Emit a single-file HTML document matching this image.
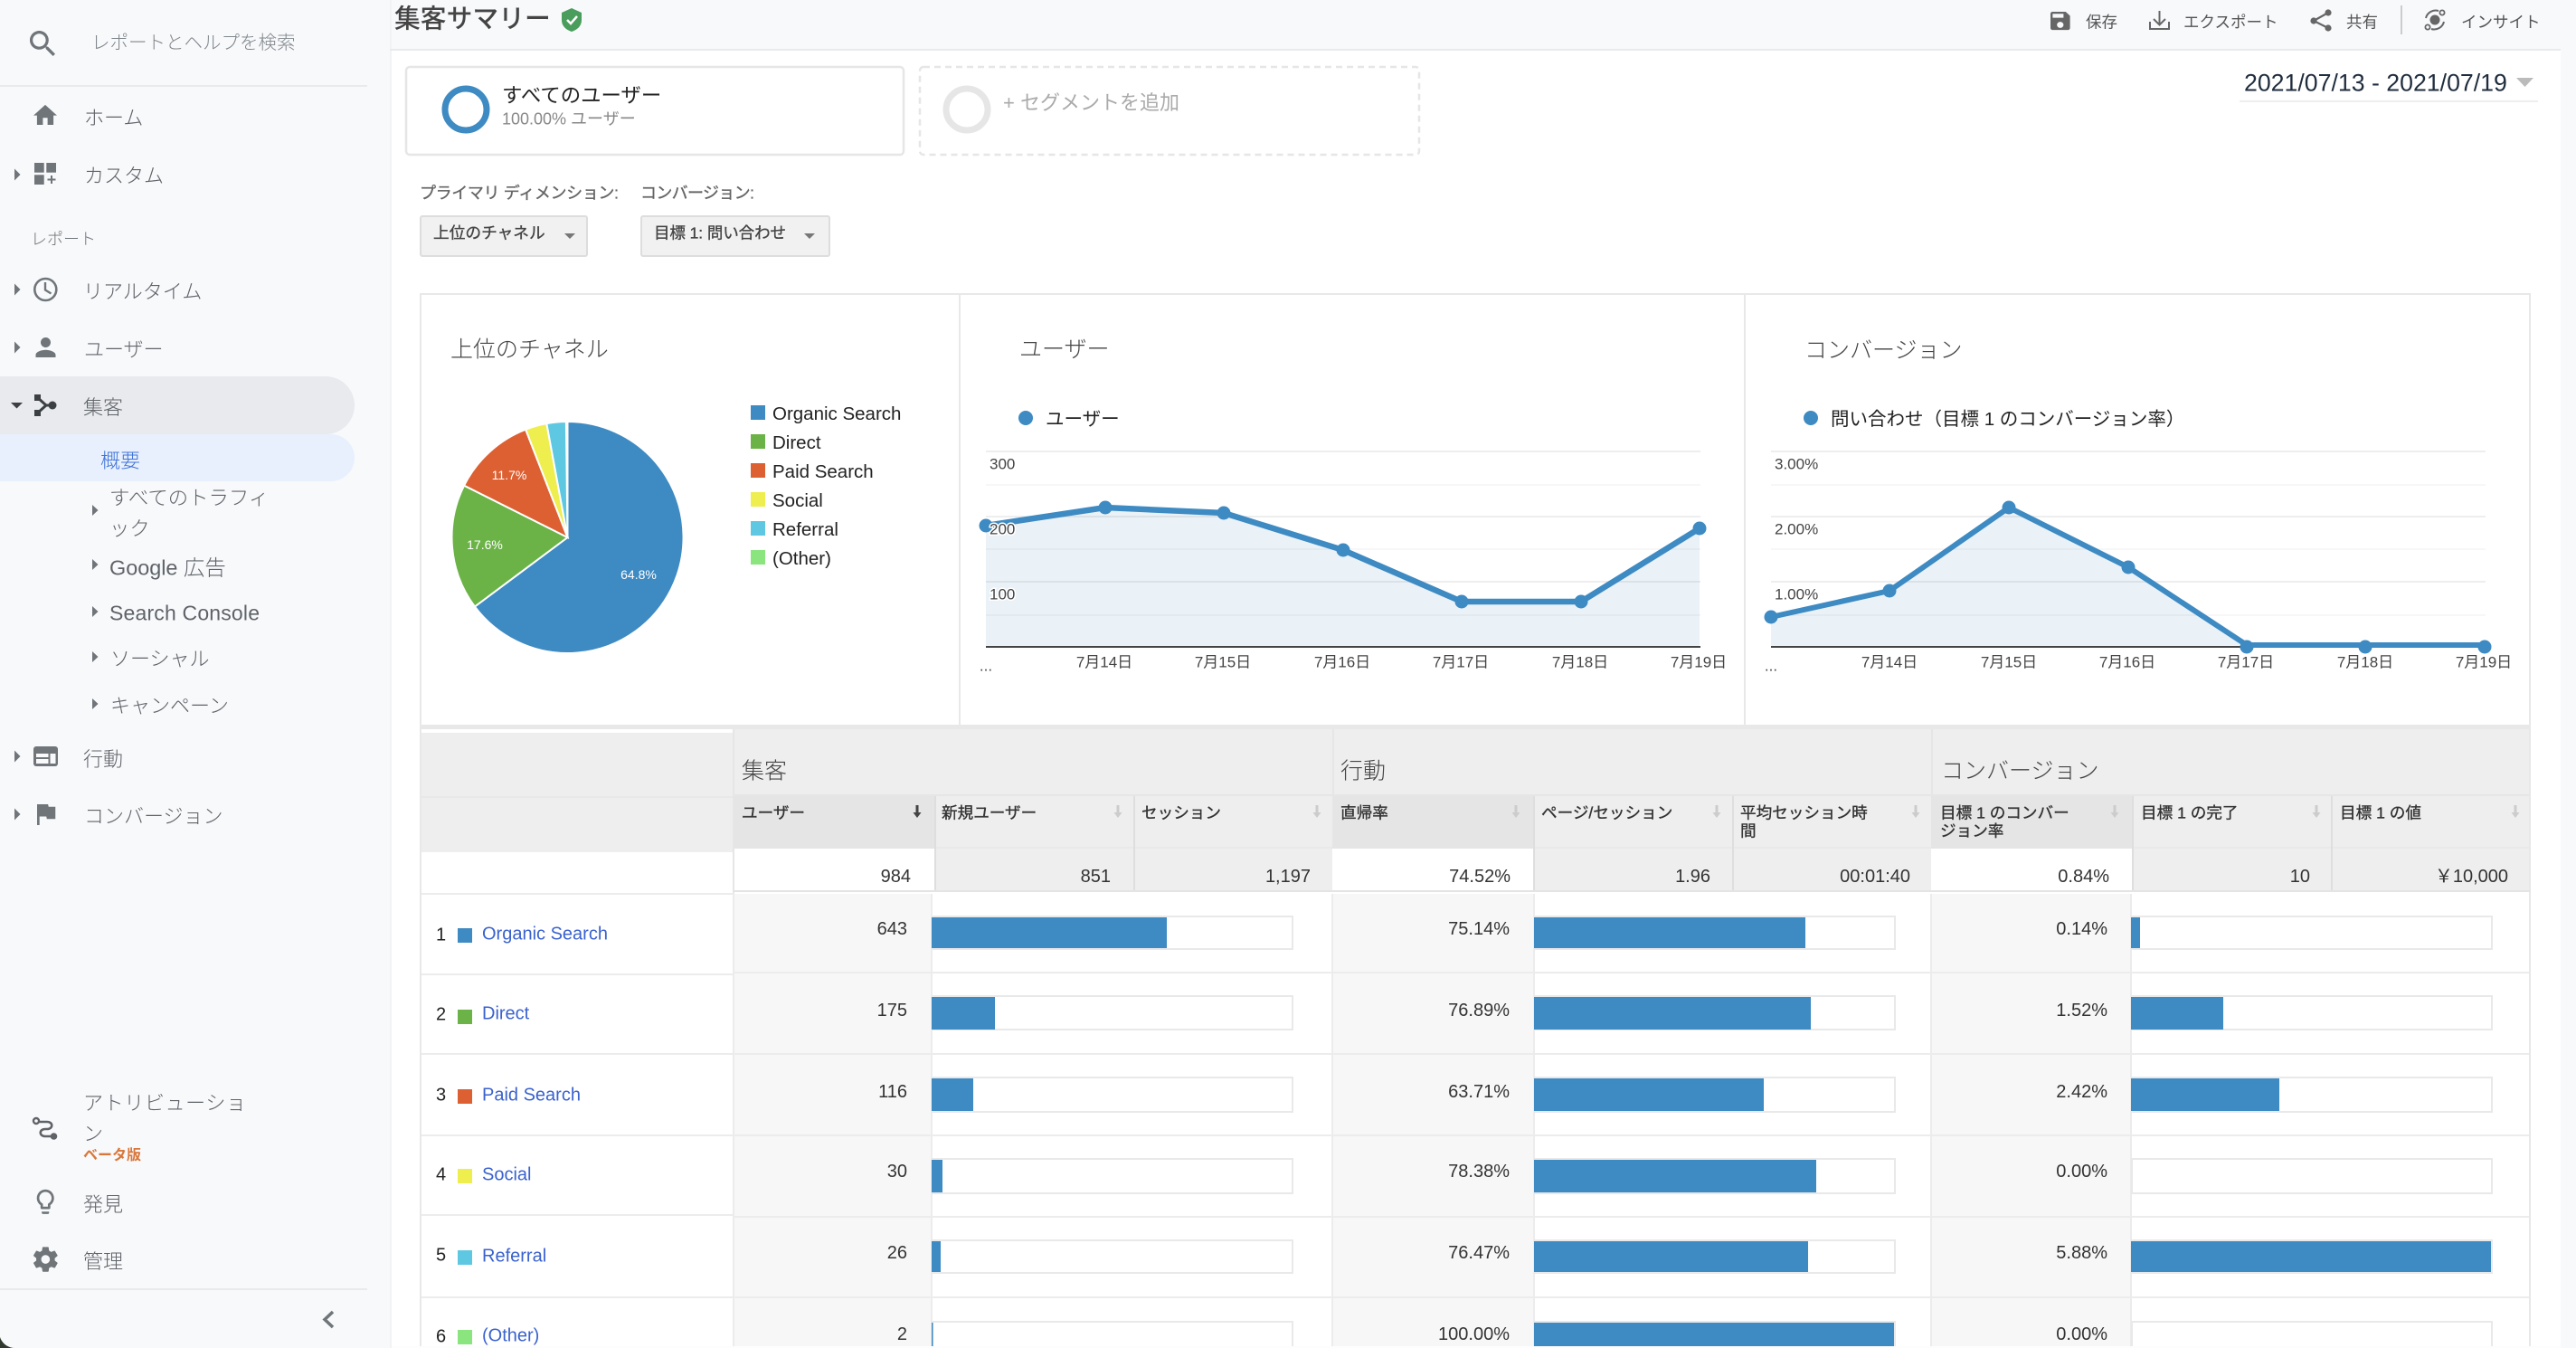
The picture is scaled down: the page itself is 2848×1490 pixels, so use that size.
<!DOCTYPE html>
<html lang="ja"><head><meta charset="utf-8"><title>集客サマリー</title>
<style>
html,body{margin:0;padding:0;background:#fff;width:2848px;height:1490px;overflow:hidden}
svg{display:block}
text{font-family:"Liberation Sans","Noto Sans CJK JP",sans-serif;dominant-baseline:central;white-space:pre}
text:not(.v):not(.ax):not(.p){transform:translateY(1.5px)}
.n{font-size:22px;fill:#5f6368;font-weight:300}
.s{font-size:22px;fill:#5f6368;font-weight:300}
.tb{font-size:17.500px;fill:#555}
.h{font-size:25px;fill:#444;font-weight:300}
.lg{font-size:20.500px;fill:#222}
.ax{font-size:17px;fill:#444}
.hd{font-size:17.600px;fill:#333;stroke:#333;stroke-width:.35px}
.v{font-size:20px;fill:#333;text-anchor:end}
.r{font-size:20px;fill:#222}
.l{font-size:20px;fill:#3a62cf}
.p{font-size:14px;fill:#fff;text-anchor:middle}
.m{text-anchor:middle}
.b{stroke:#555;stroke-width:.35px}
</style></head><body>
<svg width="2848" height="1490" viewBox="0 0 2848 1490" xmlns="http://www.w3.org/2000/svg">
<rect width="2848" height="1490" fill="#fff"/>
<!-- sidebar -->
<rect width="432" height="1490" fill="#f8f9fb"/>
<rect x="431" width="2" height="1490" fill="#f1f3f4"/>
<rect x="0" y="416" width="392" height="64" fill="#e8eaed" rx="32"/><rect x="0" y="416" width="40" height="64" fill="#e8eaed"/>
<rect x="0" y="480" width="392" height="52" fill="#e8f0fe" rx="26"/><rect x="0" y="480" width="40" height="52" fill="#e8f0fe"/>
<rect y="94" width="406" height="2" fill="#e8eaed"/>
<rect y="1424" width="406" height="2" fill="#e8eaed"/>
<g fill="#70757a">
<path transform="translate(28.2 29.2) scale(1.6)" d="M15.5 14h-.79l-.28-.27C15.41 12.59 16 11.11 16 9.5 16 5.91 13.09 3 9.5 3S3 5.91 3 9.5 5.91 16 9.5 16c1.61 0 3.09-.59 4.23-1.57l.27.28v.79l5 4.99L20.49 19l-4.99-5zm-6 0C7.01 14 5 11.99 5 9.5S7.01 5 9.5 5 14 7.01 14 9.5 11.99 14 9.5 14z"/>
<path transform="translate(34.4 112) scale(1.3)" d="M10 20v-6h4v6h5v-8h3L12 3 2 12h3v8z"/>
<rect x="38" y="180" width="10.7" height="10.7"/><rect x="51.3" y="180" width="10.7" height="10.7"/><rect x="38" y="193.3" width="10.7" height="10.7"/><path d="M56 194h2v3.5h3.5v2H58v3.5h-2v-3.500h-3.500v-2H56z"/>
<path transform="translate(34 367.500) scale(1.375)" d="M12 12c2.210 0 4-1.790 4-4s-1.790-4-4-4-4 1.790-4 4 1.790 4 4 4zm0 2c-2.670 0-8 1.340-8 4v2h16v-2c0-2.660-5.330-4-8-4z"/>
<path transform="translate(34.250 883.600) scale(1.350)" d="M14.400 6L14 4H5v17h2v-7h5.600l.4 2h7V6z"/>
<path transform="translate(33.900 1312) scale(1.360)" d="M9 21c0 .55.45 1 1 1h4c.55 0 1-.45 1-1v-1H9v1zm3-19C8.140 2 5 5.140 5 9c0 2.380 1.190 4.470 3 5.740V17c0 .55.45 1 1 1h6c.55 0 1-.45 1-1v-2.260c1.810-1.270 3-3.360 3-5.740 0-3.860-3.140-7-7-7zm2.850 11.100l-.85.6V16h-4v-2.300l-.85-.6C7.800 12.160 7 10.630 7 9c0-2.760 2.240-5 5-5s5 2.240 5 5c0 1.630-.8 3.160-2.150 4.100z"/>
<path transform="translate(33.900 1375.600) scale(1.370)" d="M19.430 12.980c.04-.32.07-.64.07-.98s-.03-.66-.07-.98l2.110-1.650c.19-.15.24-.42.12-.64l-2-3.460c-.12-.22-.39-.3-.61-.22l-2.490 1c-.52-.4-1.080-.73-1.690-.98l-.38-2.650C14.460 2.180 14.250 2 14 2h-4c-.25 0-.46.18-.49.42l-.38 2.650c-.61.25-1.170.59-1.690.98l-2.490-1c-.23-.09-.49 0-.61.22l-2 3.460c-.13.22-.07.49.12.64l2.110 1.650c-.04.32-.07.65-.07.98s.03.66.07.98l-2.110 1.650c-.19.15-.24.42-.12.64l2 3.460c.12.22.39.3.61.22l2.490-1c.52.4 1.080.73 1.690.98l.38 2.650c.03.24.24.42.49.42h4c.25 0 .46-.18.49-.42l.38-2.650c.61-.25 1.170-.59 1.690-.98l2.490 1c.23.09.49 0 .61-.22l2-3.460c.12-.22.07-.49-.12-.64l-2.110-1.650zM12 15.500c-1.930 0-3.500-1.570-3.500-3.500s1.570-3.500 3.500-3.500 3.500 1.570 3.500 3.500-1.570 3.500-3.500 3.500z"/>
<rect x="37" y="825" width="27" height="22" rx="3"/>
<polygon points="16,186.500 22.500,193 16,199.500"/><polygon points="16,313.500 22.500,320 16,326.500"/><polygon points="16,377.500 22.500,384 16,390.500"/><polygon points="16,829.500 22.500,836 16,842.500"/><polygon points="16,893.500 22.500,900 16,906.500"/>
<polygon points="102,558 108.500,564 102,570"/><polygon points="102,618 108.500,624 102,630"/><polygon points="102,670 108.500,676 102,682"/><polygon points="102,720 108.500,726 102,732"/><polygon points="102,772 108.500,778 102,784"/>
</g>
<g fill="#f8f9fb"><rect x="40" y="833" width="13.500" height="4"/><rect x="40" y="839" width="13.500" height="5"/><rect x="55.500" y="833" width="6" height="11"/></g>
<circle cx="50.300" cy="320" r="12" fill="none" stroke="#70757a" stroke-width="2.600"/>
<path d="M50 312v8.500l6.500 4" fill="none" stroke="#70757a" stroke-width="2.400"/>
<polygon points="12,445 25,445 18.500,451.500" fill="#3c4043"/>
<g fill="#3c4043"><rect x="38" y="436" width="7" height="7"/><rect x="38" y="453" width="7" height="7"/><circle cx="58" cy="448" r="4.500"/></g>
<path d="M41 439l10 9-10 9M50 448h8" fill="none" stroke="#3c4043" stroke-width="3"/>
<circle cx="40" cy="1239" r="3" fill="none" stroke="#5f6368" stroke-width="2.400"/>
<path d="M43 1240h9c7 0 7 8 0 8h-2c-7 0-7 8 0 8h7" fill="none" stroke="#5f6368" stroke-width="2.600"/>
<circle cx="59.500" cy="1256" r="3.800" fill="#5f6368"/>
<path d="M368 1450l-9 8.500 9 8.500" fill="none" stroke="#70757a" stroke-width="3.500"/>
<path d="M0 1478c2 6 7 11 15 12H0z" fill="#2f3a2c"/>
<text x="101" y="46" style="font-size:20.500px;fill:#80868b;font-weight:300">レポートとヘルプを検索</text>
<text class="n" x="93" y="129">ホーム</text>
<text class="n" x="93" y="193">カスタム</text>
<text x="34" y="263" style="font-size:18px;fill:#70757a;font-weight:300">レポート</text>
<text class="n" x="92" y="321">リアルタイム</text>
<text class="n" x="93" y="385">ユーザー</text>
<text class="n" x="92" y="449">集客</text>
<text x="111" y="508" style="font-size:22px;fill:#3f74d8;font-weight:300">概要</text>
<text class="s" x="121" y="549" style="font-size:22.400px">すべてのトラフィ</text>
<text class="s" x="121" y="583" style="font-size:22.400px">ック</text>
<text class="s" x="121" y="626" style="font-size:23.400px">Google 広告</text>
<text class="s" x="121" y="676" textLength="166" style="font-size:23px">Search Console</text>
<text class="s" x="122" y="727">ソーシャル</text>
<text class="s" x="122" y="779">キャンペーン</text>
<text class="n" x="92" y="838">行動</text>
<text class="n" x="93" y="901">コンバージョン</text>
<text class="n" x="92" y="1218" textLength="180">アトリビューショ</text>
<text class="n" x="92" y="1252">ン</text>
<text x="92" y="1276" style="font-size:16px;fill:#d9773a;font-weight:700">ベータ版</text>
<text class="n" x="92" y="1330">発見</text>
<text class="n" x="92" y="1393">管理</text>

<!-- header -->
<rect x="433" width="2415" height="54" fill="#f8f9fb"/>
<rect x="431" y="54" width="2400" height="2" fill="#e8eaed"/>
<rect x="2831" width="17" height="1490" fill="#f8f9fb"/>
<text x="436" y="20" style="font-size:28.800px;fill:#444;font-weight:500">集客サマリー</text>
<path d="M632 9l11 5v8c0 7-5 11-11 13-6-2-11-6-11-13v-8z" fill="#4a9d5c"/>
<path d="M627 22l4 4 7-8" fill="none" stroke="#fff" stroke-width="2.500"/>
<path transform="translate(2263.400 9.600) scale(1.200 1.120)" fill="#666" d="M17 3H5c-1.110 0-2 .9-2 2v14c0 1.100.89 2 2 2h14c1.100 0 2-.9 2-2V7l-4-4zm-5 16c-1.660 0-3-1.340-3-3s1.340-3 3-3 3 1.340 3 3-1.340 3-3 3zm3-10H5V5h10v4z"/>
<text class="tb" x="2306" y="23">保存</text>
<path d="M2377 24v8h21v-8M2387.500 12v15M2381 21l6.500 6.500 6.500-6.500" fill="none" stroke="#666" stroke-width="2"/>
<text class="tb" x="2414" y="23">エクスポート</text>
<g fill="#666"><circle cx="2574" cy="14" r="3.600"/><circle cx="2558" cy="23" r="3.600"/><circle cx="2574" cy="31" r="3.600"/></g>
<path d="M2574 14l-16 9 16 8" fill="none" stroke="#666" stroke-width="2.200"/>
<text class="tb" x="2594" y="23">共有</text>
<rect x="2654" y="6" width="2" height="32" fill="#ccc"/>
<circle cx="2692" cy="22" r="5.500" fill="#666"/>
<path d="M2696 12a11 11 0 0 0-14 8M2688 32a11 11 0 0 0 14-8" fill="none" stroke="#666" stroke-width="2"/>
<circle cx="2700" cy="14" r="2.600" fill="none" stroke="#666" stroke-width="1.800"/><circle cx="2684" cy="30" r="2.600" fill="none" stroke="#666" stroke-width="1.800"/>
<text class="tb" x="2721" y="23">インサイト</text>
<text x="2481" y="90" style="font-size:26.700px;fill:#1f2d3d">2021/07/13 - 2021/07/19</text>
<polygon points="2782,86 2801,86 2791.500,96" fill="#bbb"/>
<rect x="2476" y="111" width="330" height="2" fill="#eee"/>

<!-- segments -->
<rect x="449" y="74" width="550" height="97" rx="4" fill="#fff" stroke="#e6e6e6" stroke-width="2.500"/>
<circle cx="515" cy="121" r="23" fill="none" stroke="#3e8ac2" stroke-width="7"/>
<text x="555" y="104" style="font-size:22.400px;fill:#222">すべてのユーザー</text>
<text x="555" y="130" style="font-size:18px;fill:#888">100.00% ユーザー</text>
<rect x="1017" y="74" width="552" height="97" rx="4" fill="#fff" stroke="#e6e6e6" stroke-width="2.500" stroke-dasharray="7 5"/>
<circle cx="1069" cy="121" r="23" fill="none" stroke="#e6e6e6" stroke-width="7"/>
<text x="1109" y="112" style="font-size:22px;fill:#aaa">+ セグメントを追加</text>
<text class="b" x="464" y="212" textLength="220" style="font-size:18px;fill:#666;stroke:#666">プライマリ ディメンション:</text>
<text class="b" x="708" y="212" textLength="126" style="font-size:18px;fill:#666;stroke:#666">コンバージョン:</text>
<rect x="465" y="239" width="184" height="44" rx="2" fill="#f1f1f1" stroke="#ddd" stroke-width="2"/>
<text class="b" x="479" y="256" style="font-size:17.700px;fill:#444;stroke:#444">上位のチャネル</text>
<polygon points="624,258 636,258 630,264" fill="#777"/>
<rect x="709" y="239" width="208" height="44" rx="2" fill="#f1f1f1" stroke="#ddd" stroke-width="2"/>
<text class="b" x="723" y="256" textLength="146" style="font-size:17.500px;fill:#444;stroke:#444">目標 1: 問い合わせ</text>
<polygon points="889,258 901,258 895,264" fill="#777"/>

<!-- chart panel -->
<rect x="465" y="325" width="2332" height="477" fill="#fff" stroke="#e8e8e8" stroke-width="2"/>
<rect x="1060" y="325" width="2" height="477" fill="#e8e8e8"/>
<rect x="1928" y="325" width="2" height="477" fill="#e8e8e8"/>
<text class="h" x="498" y="385">上位のチャネル</text>
<text class="h" x="1127" y="385">ユーザー</text>
<text class="h" x="1995" y="386">コンバージョン</text>
<g stroke="#fff" stroke-width="2" transform="translate(627.500 594) scale(1.008) translate(-627 -594)">
<path d="M627 594V467A127 127 0 1 1 525.200 669.900Z" fill="#3e8ac2"/>
<path d="M627 594L525.200 669.900A127 127 0 0 1 513.500 537.100Z" fill="#6bb347"/>
<path d="M627 594L513.500 537.100A127 127 0 0 1 581 475.600Z" fill="#dd6033"/>
<path d="M627 594L581 475.600A127 127 0 0 1 604 469.100Z" fill="#eeee4f"/>
<path d="M627 594L604 469.100A127 127 0 0 1 625.400 467Z" fill="#5ec8e2"/>
</g>
<text class="p" x="706" y="635">64.8%</text><text class="p" x="536" y="602">17.6%</text><text class="p" x="563" y="525">11.7%</text>
<rect x="830" y="448" width="16" height="16" fill="#3e8ac2"/><text class="lg" x="854" y="456">Organic Search</text>
<rect x="830" y="480" width="16" height="16" fill="#6bb347"/><text class="lg" x="854" y="488">Direct</text>
<rect x="830" y="512" width="16" height="16" fill="#dd6033"/><text class="lg" x="854" y="520">Paid Search</text>
<rect x="830" y="544" width="16" height="16" fill="#eeee4f"/><text class="lg" x="854" y="552">Social</text>
<rect x="830" y="576" width="16" height="16" fill="#5ec8e2"/><text class="lg" x="854" y="584">Referral</text>
<rect x="830" y="608" width="16" height="16" fill="#8ae57f"/><text class="lg" x="854" y="616">(Other)</text>

<!-- chart 1 -->
<circle cx="1134" cy="462" r="8" fill="#3e8ac2"/>
<text class="lg" x="1156" y="462">ユーザー</text>
<g fill="#eee"><rect x="1090" y="498" width="790" height="2"/><rect x="1090" y="570" width="790" height="2"/><rect x="1090" y="642" width="790" height="2"/></g>
<g fill="#f7f7f7"><rect x="1090" y="535" width="790" height="2"/><rect x="1090" y="606" width="790" height="2"/><rect x="1090" y="679" width="790" height="2"/></g>
<path d="M1090 581L1222 561 1353 567 1485 608 1616 665 1748 665 1879 584V714H1090Z" fill="#3e8ac2" fill-opacity=".11"/>
<rect x="1090" y="714" width="790" height="2" fill="#444"/>
<polyline points="1090,581 1222,561 1353,567 1485,608 1616,665 1748,665 1879,584" fill="none" stroke="#3e8ac2" stroke-width="6.500"/>
<g fill="#3e8ac2"><circle cx="1090" cy="581" r="7.500"/><circle cx="1222" cy="561" r="7.500"/><circle cx="1353" cy="567" r="7.500"/><circle cx="1485" cy="608" r="7.500"/><circle cx="1616" cy="665" r="7.500"/><circle cx="1748" cy="665" r="7.500"/><circle cx="1879" cy="584" r="7.500"/></g>
<g class="ax"><text class="ax" x="1094" y="513">300</text><text class="ax" x="1094" y="585" stroke="#fff" stroke-width="3" paint-order="stroke">200</text><text class="ax" x="1094" y="657" stroke="#fff" stroke-width="3" paint-order="stroke">100</text></g>
<text class="ax m" x="1090" y="736">...</text>
<text class="ax m" x="1221" y="732">7月14日</text><text class="ax m" x="1352" y="732">7月15日</text><text class="ax m" x="1484" y="732">7月16日</text><text class="ax m" x="1615" y="732">7月17日</text><text class="ax m" x="1747" y="732">7月18日</text><text class="ax m" x="1878" y="732">7月19日</text>

<!-- chart 2 -->
<circle cx="2002" cy="462" r="8" fill="#3e8ac2"/>
<text class="lg" x="2024" y="462">問い合わせ（目標 1 のコンバージョン率）</text>
<g fill="#eee"><rect x="1958" y="498" width="790" height="2"/><rect x="1958" y="570" width="790" height="2"/><rect x="1958" y="642" width="790" height="2"/></g>
<g fill="#f7f7f7"><rect x="1958" y="535" width="790" height="2"/><rect x="1958" y="606" width="790" height="2"/><rect x="1958" y="679" width="790" height="2"/></g>
<path d="M1958 682L2089 653 2221 561 2353 627 2484 714V714H1958Z" fill="#3e8ac2" fill-opacity=".11"/>
<rect x="1958" y="714" width="790" height="2" fill="#444"/>
<polyline points="1958,682 2089,653 2221,561 2353,627 2484,713 2615,713 2747,713" fill="none" stroke="#3e8ac2" stroke-width="6"/>
<g fill="#3e8ac2"><circle cx="1958" cy="682" r="7.500"/><circle cx="2089" cy="653" r="7.500"/><circle cx="2221" cy="561" r="7.500"/><circle cx="2353" cy="627" r="7.500"/><circle cx="2484" cy="715" r="7.500"/><circle cx="2615" cy="715" r="7.500"/><circle cx="2747" cy="715" r="7.500"/></g>
<text class="ax" x="1962" y="513">3.00%</text><text class="ax" x="1962" y="585">2.00%</text><text class="ax" x="1962" y="657">1.00%</text>
<text class="ax m" x="1958" y="736">...</text>
<text class="ax m" x="2089" y="732">7月14日</text><text class="ax m" x="2221" y="732">7月15日</text><text class="ax m" x="2352" y="732">7月16日</text><text class="ax m" x="2483" y="732">7月17日</text><text class="ax m" x="2615" y="732">7月18日</text><text class="ax m" x="2746" y="732">7月19日</text>

<!-- table frame -->
<rect x="464" y="802" width="2334" height="4" fill="#e8e8e8"/>
<rect x="464" y="802" width="2" height="688" fill="#e8e8e8"/>
<rect x="2796" y="802" width="2" height="688" fill="#e8e8e8"/>
<rect x="466" y="810" width="345" height="70" fill="#eee"/>
<rect x="466" y="880" width="345" height="2" fill="#e8e8e8"/>
<rect x="466" y="882" width="345" height="60" fill="#eee"/>
<rect x="811" y="806" width="1985" height="72" fill="#eee"/>
<rect x="811" y="878" width="1985" height="2" fill="#e6e6e6"/>
<rect x="811" y="880" width="1985" height="104" fill="#eee"/>
<rect x="811" y="936" width="1985" height="2" fill="#e9e9e9"/>
<rect x="811" y="938" width="222" height="46" fill="#fff"/><rect x="1473" y="938" width="222" height="46" fill="#fff"/><rect x="2135" y="938" width="222" height="46" fill="#fff"/>
<rect x="811" y="880" width="222" height="58" fill="#e5e5e5"/><rect x="1473" y="880" width="222" height="58" fill="#e5e5e5"/><rect x="2135" y="880" width="222" height="58" fill="#e5e5e5"/>
<g fill="#dedede"><rect x="1033" y="880" width="2" height="104"/><rect x="1253" y="880" width="2" height="104"/><rect x="1695" y="880" width="2" height="104"/><rect x="1915" y="880" width="2" height="104"/><rect x="2357" y="880" width="2" height="104"/><rect x="2577" y="880" width="2" height="104"/></g>
<g fill="#e6e6e6"><rect x="1473" y="806" width="2" height="72"/><rect x="2135" y="806" width="2" height="72"/><rect x="810" y="806" width="2" height="182"/></g>
<rect x="811" y="984" width="1987" height="2" fill="#e4e4e4"/>
<text class="h" x="820" y="851">集客</text><text class="h" x="1482" y="851">行動</text><text class="h" x="2146" y="851">コンバージョン</text>
<text class="hd" x="820" y="897">ユーザー</text>
<text class="hd" x="1041" y="897">新規ユーザー</text>
<text class="hd" x="1262" y="897">セッション</text>
<text class="hd" x="1482" y="897">直帰率</text>
<text class="hd" x="1704" y="897">ページ/セッション</text>
<text class="hd" x="1924" y="897">平均セッション時</text><text class="hd" x="1924" y="917">間</text>
<text class="hd" x="2145" y="897">目標 1 のコンバー</text><text class="hd" x="2145" y="917">ジョン率</text>
<text class="hd" x="2367" y="897">目標 1 の完了</text>
<text class="hd" x="2587" y="897">目標 1 の値</text>
<g fill="#ccc">
<path d="M1234.500 890h3v8h3l-4.500 6-4.500-6h3z"/><path d="M1454.500 890h3v8h3l-4.500 6-4.500-6h3z"/><path d="M1674.500 890h3v8h3l-4.500 6-4.500-6h3z"/><path d="M1896.500 890h3v8h3l-4.500 6-4.500-6h3z"/><path d="M2116.500 890h3v8h3l-4.500 6-4.500-6h3z"/><path d="M2336.500 890h3v8h3l-4.500 6-4.500-6h3z"/><path d="M2559.500 890h3v8h3l-4.500 6-4.500-6h3z"/><path d="M2779.500 890h3v8h3l-4.500 6-4.500-6h3z"/>
</g>
<path d="M1012.500 890h3v8h3l-4.500 6-4.500-6h3z" fill="#444"/>
<text class="v" x="1007" y="969">984</text><text class="v" x="1228" y="969">851</text><text class="v" x="1449" y="969">1,197</text><text class="v" x="1670" y="969">74.52%</text><text class="v" x="1891" y="969">1.96</text><text class="v" x="2112" y="969">00:01:40</text><text class="v" x="2332" y="969">0.84%</text><text class="v" x="2554" y="969">10</text><text class="v" x="2773" y="969">￥10,000</text>

<!-- rows -->
<g fill="#f7f7f7"><rect x="811" y="988" width="218" height="500"/><rect x="1473" y="988" width="222" height="500"/><rect x="2135" y="988" width="220" height="500"/></g>
<g fill="#ececec">
<rect x="1029" y="988" width="2" height="500"/><rect x="1695" y="988" width="2" height="500"/><rect x="2355" y="988" width="2" height="500"/><rect x="810" y="988" width="2" height="500"/><rect x="1472" y="988" width="2" height="500"/><rect x="2134" y="988" width="2" height="500"/>
<rect x="466" y="987" width="345" height="2"/><rect x="466" y="1076" width="345" height="2"/><rect x="466" y="1164" width="345" height="2"/><rect x="466" y="1254" width="345" height="2"/><rect x="466" y="1342" width="345" height="2"/><rect x="466" y="1433" width="345" height="2"/>
<rect x="811" y="1074" width="1985" height="2"/><rect x="811" y="1164" width="1985" height="2"/><rect x="811" y="1254" width="1985" height="2"/><rect x="811" y="1344" width="1985" height="2"/><rect x="811" y="1433" width="1985" height="2"/>
</g>
<!-- bar boxes -->
<g fill="#fff" stroke="#e9e9e9" stroke-width="2">
<rect x="1031" y="1013" width="398" height="36"/><rect x="1697" y="1013" width="398" height="36"/><rect x="2357" y="1013" width="398" height="36"/>
<rect x="1031" y="1101" width="398" height="37"/><rect x="1697" y="1101" width="398" height="37"/><rect x="2357" y="1101" width="398" height="37"/>
<rect x="1031" y="1191" width="398" height="38"/><rect x="1697" y="1191" width="398" height="38"/><rect x="2357" y="1191" width="398" height="38"/>
<rect x="1031" y="1281" width="398" height="38"/><rect x="1697" y="1281" width="398" height="38"/><rect x="2357" y="1281" width="398" height="38"/>
<rect x="1031" y="1371" width="398" height="36"/><rect x="1697" y="1371" width="398" height="36"/><rect x="2357" y="1371" width="398" height="36"/>
<rect x="1031" y="1461" width="398" height="40"/><rect x="1697" y="1461" width="398" height="40"/><rect x="2357" y="1461" width="398" height="40"/>
</g>
<g fill="#3e8ac2">
<rect x="1030" y="1014" width="260" height="34"/><rect x="1696" y="1014" width="300" height="34"/><rect x="2356" y="1014" width="10" height="34"/>
<rect x="1030" y="1102" width="70" height="36"/><rect x="1696" y="1102" width="306" height="36"/><rect x="2356" y="1102" width="102" height="36"/>
<rect x="1030" y="1192" width="46" height="36"/><rect x="1696" y="1192" width="254" height="36"/><rect x="2356" y="1192" width="164" height="36"/>
<rect x="1030" y="1282" width="12" height="36"/><rect x="1696" y="1282" width="312" height="36"/>
<rect x="1030" y="1372" width="10" height="34"/><rect x="1696" y="1372" width="303" height="34"/><rect x="2356" y="1372" width="398" height="34"/>
<rect x="1030" y="1462" width="1.500" height="28"/><rect x="1696" y="1462" width="398" height="28"/>
</g>
<text class="r" x="482" y="1032">1</text><rect x="506" y="1026" width="16" height="16" fill="#3e8ac2"/><text class="l" x="533" y="1031">Organic Search</text>
<text class="r" x="482" y="1120">2</text><rect x="506" y="1116" width="16" height="16" fill="#6bb347"/><text class="l" x="533" y="1119">Direct</text>
<text class="r" x="482" y="1209">3</text><rect x="506" y="1204" width="16" height="16" fill="#dd6033"/><text class="l" x="533" y="1209">Paid Search</text>
<text class="r" x="482" y="1297">4</text><rect x="506" y="1292" width="16" height="16" fill="#eeee4f"/><text class="l" x="533" y="1297">Social</text>
<text class="r" x="482" y="1386">5</text><rect x="506" y="1382" width="16" height="16" fill="#5ec8e2"/><text class="l" x="533" y="1387">Referral</text>
<text class="r" x="482" y="1476">6</text><rect x="506" y="1470" width="16" height="16" fill="#8ae57f"/><text class="l" x="533" y="1475">(Other)</text>
<text class="v" x="1003" y="1027">643</text><text class="v" x="1669" y="1027">75.14%</text><text class="v" x="2330" y="1027">0.14%</text>
<text class="v" x="1003" y="1117">175</text><text class="v" x="1669" y="1117">76.89%</text><text class="v" x="2330" y="1117">1.52%</text>
<text class="v" x="1003" y="1207">116</text><text class="v" x="1669" y="1207">63.71%</text><text class="v" x="2330" y="1207">2.42%</text>
<text class="v" x="1003" y="1295">30</text><text class="v" x="1669" y="1295">78.38%</text><text class="v" x="2330" y="1295">0.00%</text>
<text class="v" x="1003" y="1385">26</text><text class="v" x="1669" y="1385">76.47%</text><text class="v" x="2330" y="1385">5.88%</text>
<text class="v" x="1003" y="1475">2</text><text class="v" x="1669" y="1475">100.00%</text><text class="v" x="2330" y="1475">0.00%</text>
<rect x="433" y="1488" width="2398" height="2" fill="#fdfdfd"/>
</svg>
</body></html>
